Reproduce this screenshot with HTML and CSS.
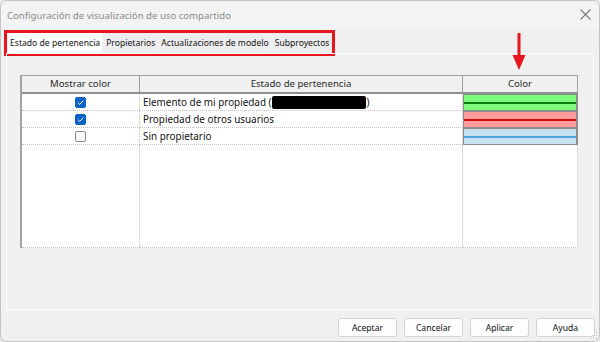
FILE: index.html
```html
<!DOCTYPE html>
<html lang="es">
<head>
<meta charset="utf-8">
<title>Configuración de visualización de uso compartido</title>
<link rel="stylesheet" href="styles.css">
</head>
<body>
<div class="window">
  <div class="titlebar">
    <span class="title">Configuración de visualización de uso compartido</span>
    <svg class="close" width="11" height="11" viewBox="0 0 11 11"><path d="M0.5 0.5L10.5 10.5M10.5 0.5L0.5 10.5" stroke="#7a7a7a" stroke-width="1.1" fill="none"/></svg>
  </div>
  <div class="tabstrip">
    <div class="tab active">Estado de pertenencia</div>
    <div class="tab">Propietarios</div>
    <div class="tab">Actualizaciones de modelo</div>
    <div class="tab">Subproyectos</div>
  </div>
  <div class="panel">
    <div class="grid">
      <div class="hcell">Mostrar color</div>
      <div class="hcell">Estado de pertenencia</div>
      <div class="hcell">Color</div>

      <div class="cell center"><span class="cb checked"><svg width="11" height="11" viewBox="0 0 11 11"><path d="M2.8 5.6L4.7 7.4L8.3 3.6" stroke="#fff" stroke-width="1" fill="none"/></svg></span></div>
      <div class="cell text">Elemento de mi propiedad (<span class="redact"></span>)</div>
      <div class="cell swatchcell"><div class="swatch green"></div></div>

      <div class="cell center"><span class="cb checked"><svg width="11" height="11" viewBox="0 0 11 11"><path d="M2.8 5.6L4.7 7.4L8.3 3.6" stroke="#fff" stroke-width="1" fill="none"/></svg></span></div>
      <div class="cell text">Propiedad de otros usuarios</div>
      <div class="cell swatchcell"><div class="swatch red"></div></div>

      <div class="cell center"><span class="cb"></span></div>
      <div class="cell text">Sin propietario</div>
      <div class="cell swatchcell"><div class="swatch blue"></div></div>

      <div class="cell filler"></div>
      <div class="cell filler"></div>
      <div class="cell filler"></div>
    </div>
  </div>
  <div class="buttons">
    <button class="btn">Aceptar</button>
    <button class="btn">Cancelar</button>
    <button class="btn">Aplicar</button>
    <button class="btn">Ayuda</button>
  </div>
  <svg class="arrow" width="16" height="40" viewBox="0 0 16 40"><path d="M8 0V24" stroke="#e5161d" stroke-width="3"/><path d="M1.5 22H14.5L8 37Z" fill="#e5161d"/></svg>
  <svg class="grip" width="8" height="8" viewBox="0 0 8 8"><g fill="#b8b8b8"><rect x="6" y="0" width="1" height="1"/><rect x="3" y="3" width="1" height="1"/><rect x="6" y="3" width="1" height="1"/><rect x="0" y="6" width="1" height="1"/><rect x="3" y="6" width="1" height="1"/><rect x="6" y="6" width="1" height="1"/></g></svg>
</div>
</body>
</html>
```

FILE: styles.css
```css
html, body {
  margin: 0;
  padding: 0;
  background: #e9e9e9;
}
body {
  width: 600px;
  height: 342px;
  overflow: hidden;
}
.window {
  position: relative;
  box-sizing: border-box;
  width: 600px;
  height: 342px;
  border: 1px solid #c4c4c4;
  border-radius: 7px;
  background: #f0f0f0;
  display: flex;
  flex-direction: column;
  font-family: "Noto Sans", "Open Sans", sans-serif;
  color: #111;
  overflow: hidden;
}
.titlebar {
  height: 28px;
  flex: none;
  display: flex;
  align-items: center;
  justify-content: space-between;
  padding: 0 8px 0 6px;
  background: #f3f3f3;
}
.title {
  font-size: 9.6px;
  color: #8b8b8b;
}
.close {
  margin-top: -1px;
}
.tabstrip {
  align-self: flex-start;
  display: flex;
  height: 20px;
  margin: 4px 0 0 6px;
  outline: 3px solid #e5161d;
  background: #f0f0f0;
  gap: 2px;
  padding-right: 1px;
}
.tab {
  font-size: 8.6px;
  line-height: 20px;
  padding: 0 2px;
  background: #eeeeee;
  white-space: nowrap;
  color: #111;
}
.tab.active {
  background: #ffffff;
  padding: 0 2px 0 2px;
  margin-left: 1px;
}
.panel {
  flex: none;
  height: 257px;
  box-sizing: border-box;
  margin: 0 5px 0 5px;
  border: 1px solid #fbfbfb;
  padding: 21px 0 0 13px;
}
.grid {
  display: grid;
  grid-template-columns: 118px 323px 115px;
  grid-template-rows: 19px 17px 17px 17px 1fr;
  height: 173px;
  width: 558px;
  box-sizing: border-box;
  border-left: 2px solid #a3a3a3;
  background: #ffffff;
}
.hcell {
  box-sizing: border-box;
  background: #f0f0f0;
  border-top: 1px solid #9d9d9d;
  border-bottom: 2px solid #8f8f8f;
  border-right: 1px solid #9d9d9d;
  font-size: 9.6px;
  color: #2a2a2a;
  text-align: center;
  line-height: 16px;
}
.cell {
  box-sizing: border-box;
  border-right: 1px dotted #c2c2c2;
  border-bottom: 1px dotted #c2c2c2;
  font-size: 9.9px;
  line-height: 16px;
}
.cell.center {
  display: flex;
  align-items: center;
  justify-content: center;
  padding-right: 1px;
}
.cell.text {
  padding-left: 3px;
  display: flex;
  align-items: center;
  white-space: nowrap;
}
.redact {
  display: inline-block;
  width: 94px;
  height: 13px;
  background: #000;
  border-radius: 2px;
  margin: 0 1px 0 0;
}
.cb {
  box-sizing: border-box;
  width: 11px;
  height: 11px;
  border-radius: 2px;
  border: 1px solid #8a8a8a;
  background: #fbfbfb;
  display: block;
}
.cb svg {
  display: block;
  margin: -1px;
}
.cb.checked {
  background: #0c63c7;
  border-color: #0c63c7;
}
.swatchcell {
  border-right: none;
  border-bottom: none;
}
.swatch {
  box-sizing: border-box;
  height: 17px;
  border: 1px solid #8c8c8c;
  border-right-width: 2px;
}
.swatch.green {
  background: linear-gradient(to bottom, #7dfb7d 0, #7dfb7d 7px, #0e7a12 7px, #0e7a12 9px, #7dfb7d 9px);
}
.swatch.red {
  background: linear-gradient(to bottom, #ff9b9b 0, #ff9b9b 7px, #cc1010 7px, #cc1010 9px, #ff9b9b 9px);
}
.swatch.blue {
  background: linear-gradient(to bottom, #c7e1f0 0, #c7e1f0 7px, #4ea5dd 7px, #4ea5dd 9px, #c7e1f0 9px);
}
.filler {
  border-bottom: 1px dotted #c2c2c2;
}
.buttons {
  display: flex;
  justify-content: flex-end;
  gap: 7px;
  padding: 8px 4px 0 0;
}
.btn {
  width: 59px;
  height: 19px;
  padding: 0;
  box-sizing: border-box;
  border: 1px solid #d3d3d3;
  border-radius: 3px;
  background: #fdfdfd;
  font-family: "Noto Sans", "Open Sans", sans-serif;
  font-size: 8.6px;
  color: #111;
}
.arrow {
  position: absolute;
  left: 510px;
  top: 32px;
}
.grip {
  position: absolute;
  right: 1px;
  bottom: 1px;
}
```
